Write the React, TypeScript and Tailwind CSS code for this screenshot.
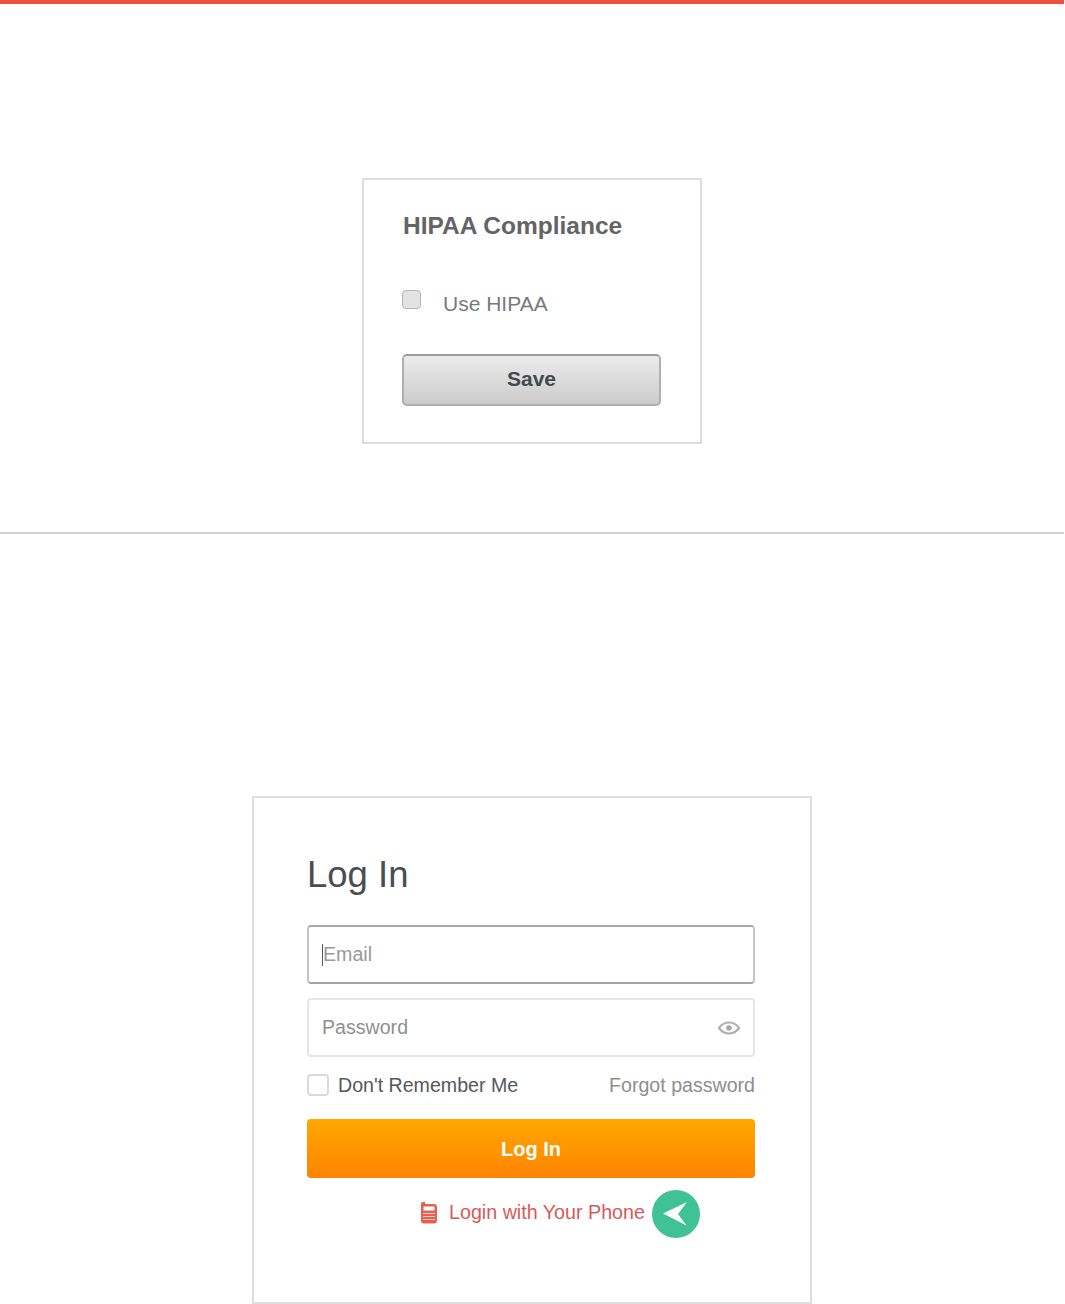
const PhoneIcon = () => (
    <svg width="18" height="23" viewBox="0 0 18 23" fill="none">
        <path d="M3 1h2v2h9a3 3 0 0 1 3 3v13.500a3 3 0 0 1-3 3H4a3 3 0 0 1-3-3V3a2 2 0 0 1 2-2z" fill="#e5604d" />
        <rect x="3.500" y="5.500" width="11" height="4" rx="0.500" fill="#fff" />
        <path d="M3 12.500h12M3 15.500h12M3 18.500h12" stroke="#fff" strokeWidth="1" opacity="0.7" />
    </svg>
)

const EyeIcon = () => (
    <svg width="22" height="14" viewBox="0 0 22 14" fill="none">
        <path d="M1 7c2.500-3.600 5.800-5.500 10-5.500S18.500 3.400 21 7c-2.500 3.600-5.800 5.500-10 5.500S3.500 10.600 1 7z" stroke="#b0b0b0" strokeWidth="2.200" />
        <circle cx="11" cy="7" r="2.800" fill="#a8a8a8" />
    </svg>
)

const ArrowBadge = () => (
    <div className="absolute left-[232px] top-[-8px] w-12 h-12 rounded-full bg-[#3fc296]">
        <svg width="48" height="48" viewBox="0 0 48 48" className="block">
            <path d="M11 23.500 35 12 26 24 34.500 35.500z" fill="#fff" />
        </svg>
    </div>
)

export default function App() {
    return (
        <div className="w-[1064px] font-['Liberation_Sans',Arial,sans-serif] bg-white">
            <div className="h-1 bg-[#ef5140]" />

            <section className="h-[528px] pt-[174px] flex justify-center items-start">
                <div className="w-[340px] h-[266px] border-2 border-[#dddddd] pt-[31px] px-[39px]">
                    <h2 className="text-[24.500px] leading-[30px] font-bold text-[#636466]">HIPAA Compliance</h2>
                    <div className="flex items-start mt-[50px] h-[33px]">
                        <span className="w-[19px] h-[19px] mt-[-1px] ml-[-1px] rounded-[4px] border border-[#b5b5b5] bg-[#e3e3e3]" />
                        <span className="ml-[22px] text-[21px] leading-[28px] mt-[-1px] text-[#767a7e]">Use HIPAA</span>
                    </div>
                    <button className="block w-[259px] h-[52px] mt-[30px] ml-[-1px] pb-[2px] rounded-[5px] border-2 border-[#b0b0b0] border-t-[#9c9c9c] bg-linear-to-b from-[#ececec] to-[#cbcbcb] text-[21px] font-bold text-[#444a4c]">Save</button>
                </div>
            </section>

            <div className="h-[2px] bg-[#d2d2d2]" />

            <section className="pt-[262px] flex justify-center items-start">
                <div className="w-[560px] h-[508px] border-2 border-[#dddddd] pt-[52px] pl-[53px] pr-[55px]">
                    <h1 className="text-[36.500px] leading-[50px] text-[#484e52]">Log In</h1>
                    <div className="mt-[25px] h-[59px] rounded-[4px] border-2 border-[#c4c4c4] border-t-[#a8a8a8] border-b-[#a4a4a4] flex items-center pl-[13px]">
                        <span className="w-px h-[22px] bg-[#555a60]" />
                        <span className="text-[19.600px] text-[#999999]">Email</span>
                    </div>
                    <div className="mt-[14px] h-[59px] rounded-[4px] border-2 border-[#e6e6e6] flex items-center justify-between pl-[13px] pr-[13px]">
                        <span className="text-[19.600px] text-[#8f8f8f]">Password</span>
                        <EyeIcon />
                    </div>
                    <div className="mt-[13px] h-[30px] flex items-center justify-between">
                        <div className="flex items-center">
                            <span className="w-[22px] h-[22px] rounded-[4px] border-2 border-[#dadada] bg-white" />
                            <span className="ml-[9px] mt-[2px] text-[19.600px] text-[#55585c]">Don&apos;t Remember Me</span>
                        </div>
                        <span className="mt-[2px] text-[19.600px] text-[#8e8e8e]">Forgot password</span>
                    </div>
                    <button className="block w-full h-[59px] mt-[19px] rounded-[4px] bg-linear-to-b from-[#ffa800] to-[#ff8300] text-[20px] font-bold text-white">Log In</button>
                    <div className="mt-[20px] ml-[3px] flex justify-center">
                        <div className="relative flex items-center h-[28px]">
                            <PhoneIcon />
                            <span className="ml-[11px] mt-[2px] text-[19.700px] text-[#d8595a]">Login with Your Phone</span>
                            <ArrowBadge />
                        </div>
                    </div>
                </div>
            </section>
        </div>
    )
}
